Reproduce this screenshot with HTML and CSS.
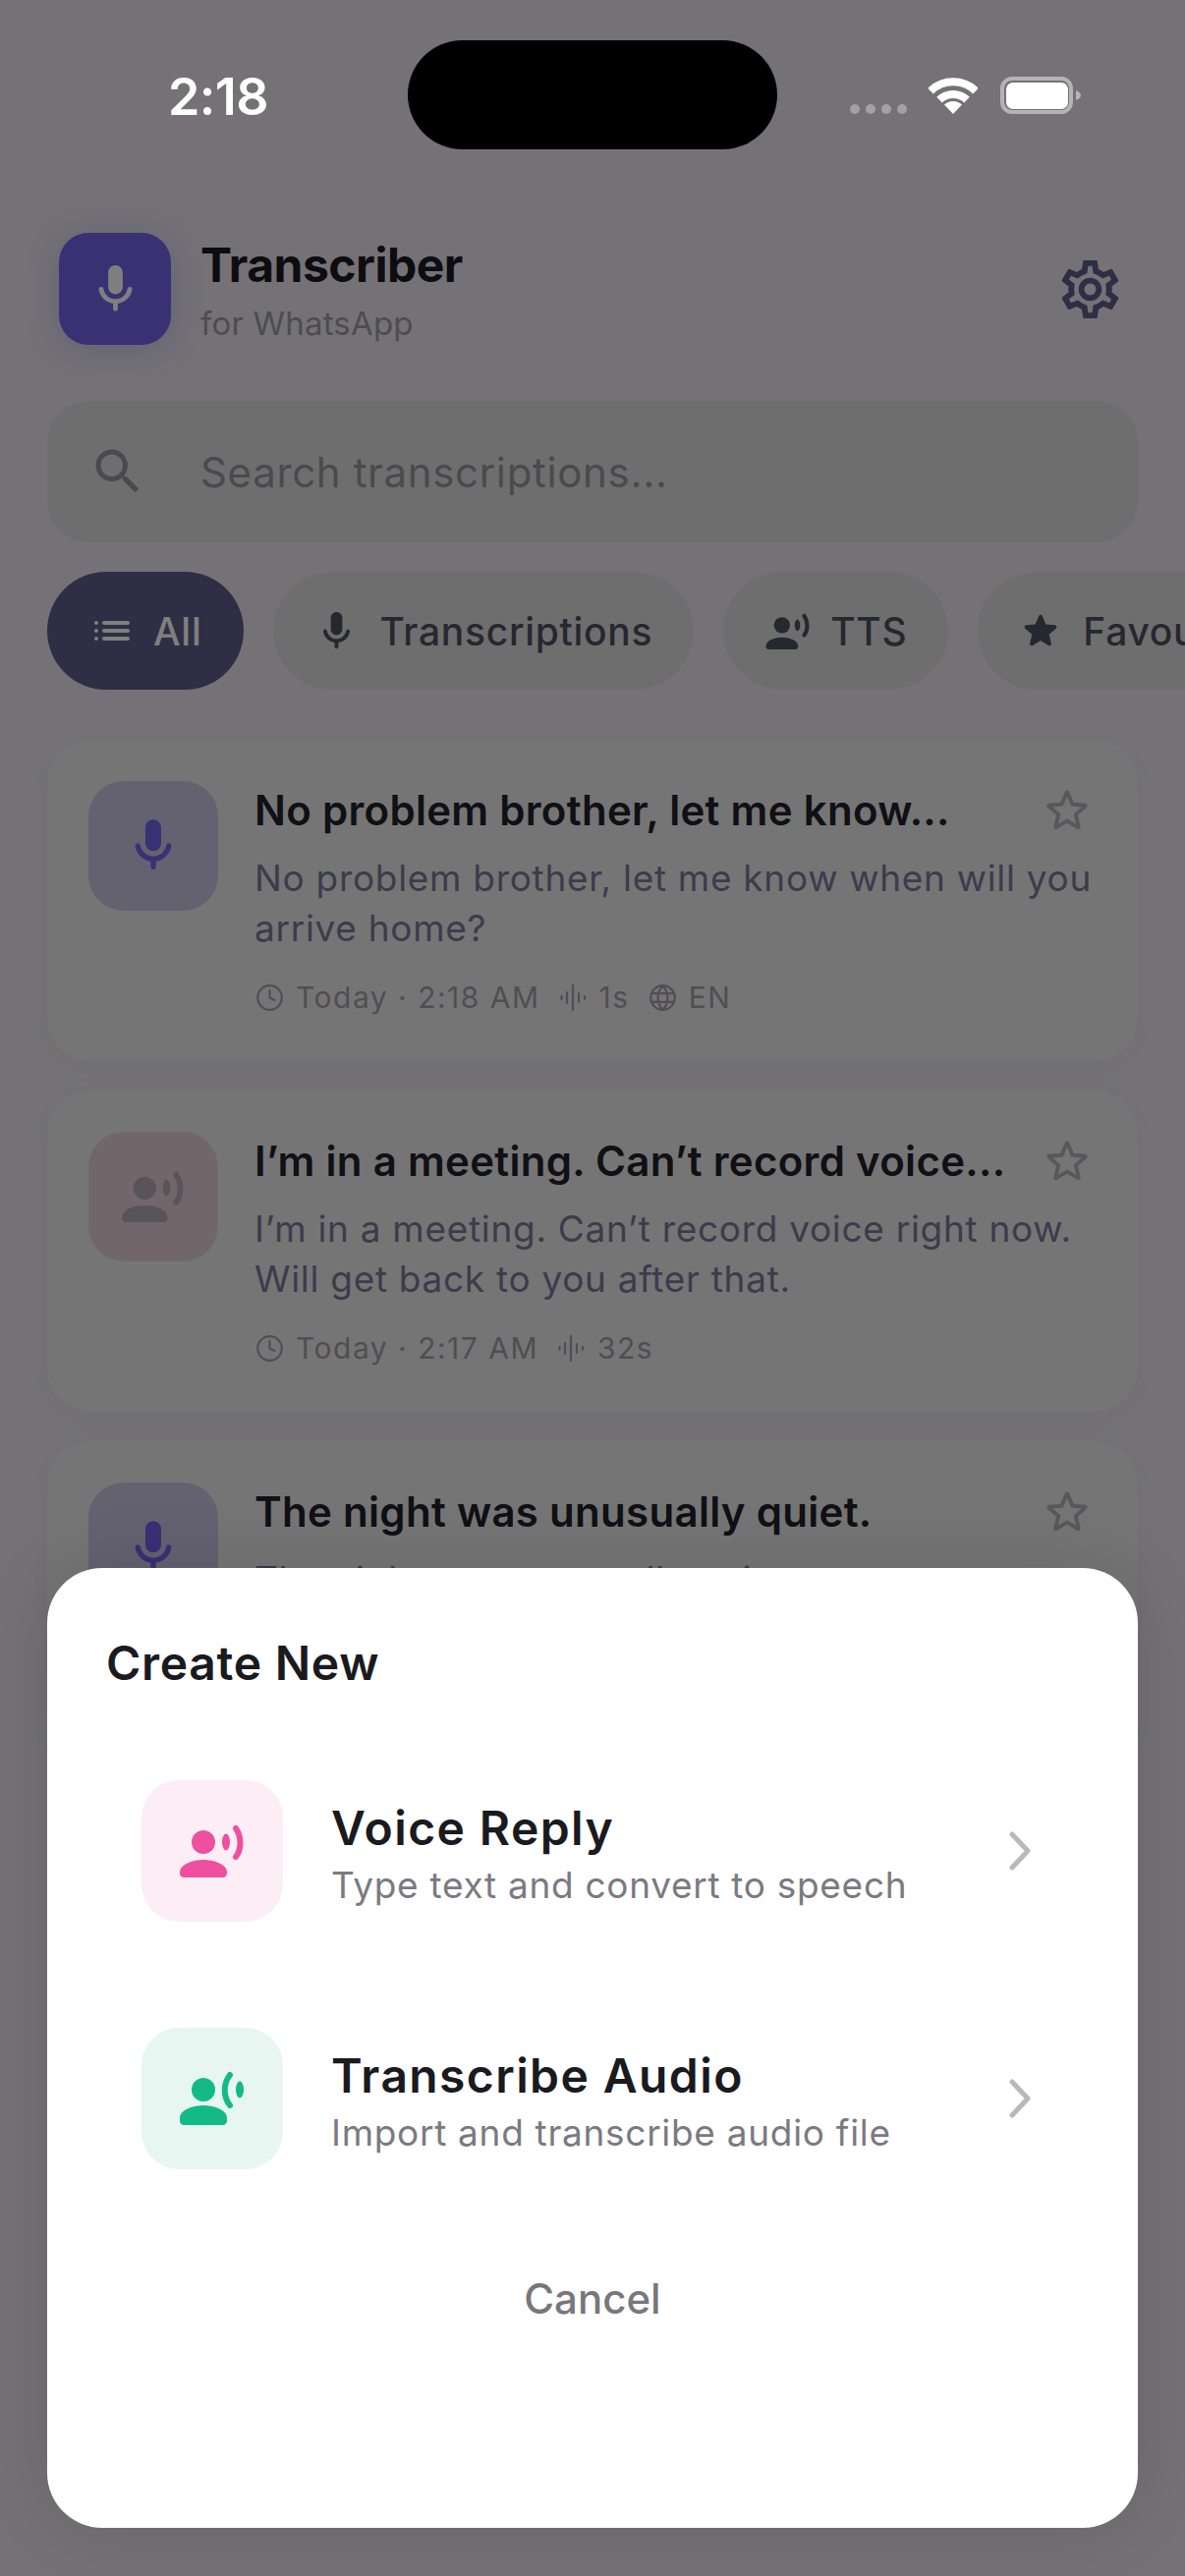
FILE: index.html
```html
<!DOCTYPE html>
<html lang="en">
	<head>
		<meta charset="UTF-8" />
		<title>Transcriber for WhatsApp</title>
		<link rel="stylesheet" href="styles.css">
	</head>
	<body>
		<svg class="sprites" xmlns="http://www.w3.org/2000/svg">
			<symbol id="i-mic" viewBox="0 0 24 24"><path d="M12 14c1.66 0 3-1.34 3-3V5c0-1.66-1.34-3-3-3S9 3.34 9 5v6c0 1.66 1.34 3 3 3zm5.91-3c-.49 0-.9.36-.98.85C16.52 14.2 14.47 16 12 16s-4.52-1.8-4.93-4.15c-.08-.49-.49-.85-.98-.85-.61 0-1.09.54-1 1.14.49 3 2.89 5.35 5.91 5.78V20c0 .55.45 1 1 1s1-.45 1-1v-2.08c3.02-.43 5.42-2.78 5.91-5.78.1-.6-.39-1.14-1-1.14z"/></symbol>
			<symbol id="i-voice" viewBox="36 42 72 60"><circle cx="63" cy="63" r="12"/><path d="M39 94c0-9 14-13 24-13s24 4 24 13v1c0 2-2 4-4 4H43c-2 0-4-2-4-4z"/><ellipse cx="86" cy="63" rx="4" ry="8.5"/><path d="M96 49c6 9 6 21 0 29" fill="none" stroke="currentColor" stroke-width="6" stroke-linecap="round"/></symbol>
			<symbol id="i-listen" viewBox="36 42 72 60"><circle cx="63" cy="63" r="12"/><path d="M39 92c0-9 14-13 24-13s24 4 24 13v3c0 2-2 4-4 4H43c-2 0-4-2-4-4z"/><ellipse cx="100" cy="63" rx="4" ry="8.5"/><path d="M90 48c-7 9-7 22 0 31" fill="none" stroke="currentColor" stroke-width="6" stroke-linecap="round"/></symbol>
			<symbol id="i-star" viewBox="0 0 24 24"><path d="M19.65 9.04l-4.84-.42-1.89-4.45c-.34-.81-1.5-.81-1.84 0L9.19 8.63l-4.84.41c-.88.07-1.24 1.17-.57 1.75l3.67 3.18-1.1 4.72c-.2.86.73 1.54 1.49 1.08l4.16-2.5 4.16 2.51c.76.46 1.69-.22 1.49-1.08l-1.1-4.73 3.67-3.18c.67-.58.32-1.68-.56-1.75zM12 15.4l-3.76 2.27 1-4.28-3.32-2.88 4.38-.38L12 6.1l1.71 4.04 4.38.38-3.32 2.88 1 4.28L12 15.4z"/></symbol>
			<symbol id="i-clock" viewBox="1 1 22 22"><g fill="none" stroke="currentColor" stroke-width="1.8" stroke-linecap="round" stroke-linejoin="round"><circle cx="12" cy="12" r="10"/><path d="M12 6v6l4 2"/></g></symbol>
			<symbol id="i-wave" viewBox="0 0 27 27"><g stroke="currentColor" stroke-width="2.2" stroke-linecap="round"><path d="M1.5 12v3M7 8v11M13 1v25M19 9v9M25 12v3"/></g></symbol>
			<symbol id="i-globe" viewBox="1 1 22 22"><g fill="none" stroke="currentColor" stroke-width="1.8"><circle cx="12" cy="12" r="10"/><path d="M12 2a14.500 14.500 0 0 0 0 20 14.500 14.500 0 0 0 0-20M2.600 8.500h18.800M2.600 15.500h18.800"/></g></symbol>
		</svg>

		<div class="screen">
			<div class="app">
				<div class="status-spacer"></div>

				<header class="top">
					<div class="logo">
						<svg class="logo-mic"><use href="#i-mic"/></svg>
					</div>
					<div class="brand">
						<div class="brand-name">Transcriber</div>
						<div class="brand-sub">for WhatsApp</div>
					</div>
					<svg class="gear" viewBox="0 0 24 24"><path d="M19.43 12.98c.04-.32.07-.64.07-.98 0-.34-.03-.66-.07-.98l2.11-1.65c.19-.15.24-.42.12-.64l-2-3.46c-.09-.16-.26-.25-.44-.25-.06 0-.12.01-.17.03l-2.49 1c-.52-.4-1.08-.73-1.69-.98l-.38-2.65C14.46 2.18 14.25 2 14 2h-4c-.25 0-.46.18-.49.42l-.38 2.65c-.61.25-1.17.59-1.69.98l-2.49-1c-.06-.02-.12-.03-.18-.03-.17 0-.34.09-.43.25l-2 3.46c-.13.22-.07.49.12.64l2.11 1.65c-.04.32-.07.65-.07.98 0 .33.03.66.07.98l-2.11 1.65c-.19.15-.24.42-.12.64l2 3.46c.09.16.26.25.44.25.06 0 .12-.01.17-.03l2.49-1c.52.4 1.08.73 1.69.98l.38 2.65c.03.24.24.42.49.42h4c.25 0 .46-.18.49-.42l.38-2.65c.61-.25 1.17-.59 1.69-.98l2.49 1c.06.02.12.03.18.03.17 0 .34-.09.43-.25l2-3.46c.12-.22.07-.49-.12-.64l-2.11-1.65zm-1.98-1.71c.04.31.05.52.05.73 0 .21-.02.43-.05.73l-.14 1.13.89.7 1.08.84-.7 1.21-1.27-.51-1.04-.42-.9.68c-.43.32-.84.56-1.25.73l-1.06.43-.16 1.13-.2 1.35h-1.4l-.19-1.35-.16-1.13-1.06-.43c-.43-.18-.83-.41-1.23-.71l-.91-.7-1.06.43-1.27.51-.7-1.21 1.08-.84.89-.7-.14-1.13c-.03-.31-.05-.54-.05-.74s.02-.43.05-.73l.14-1.13-.89-.7-1.08-.84.7-1.21 1.27.51 1.04.42.9-.68c.43-.32.84-.56 1.25-.73l1.06-.43.16-1.13.2-1.35h1.39l.19 1.35.16 1.13 1.06.43c.43.18.83.41 1.23.71l.91.7 1.06-.43 1.27-.51.7 1.21-1.07.85-.89.7.14 1.13zM12 8c-2.21 0-4 1.79-4 4s1.79 4 4 4 4-1.79 4-4-1.79-4-4-4zm0 6c-1.1 0-2-.9-2-2s.9-2 2-2 2 .9 2 2-.9 2-2 2z"/></svg>
				</header>

				<div class="search">
					<svg class="search-icon" viewBox="0 0 24 24"><path d="M15.5 14h-.79l-.28-.27C15.41 12.59 16 11.11 16 9.5 16 5.91 13.09 3 9.5 3S3 5.91 3 9.5 5.91 16 9.5 16c1.61 0 3.09-.59 4.23-1.57l.27.28v.79l5 4.99L20.49 19l-4.99-5zm-6 0C7.01 14 5 11.99 5 9.5S7.01 5 9.5 5 14 7.01 14 9.5 11.99 14 9.5 14z"/></svg>
					<span class="search-text">Search transcriptions...</span>
				</div>

				<div class="chips">
					<div class="chip chip-active">
						<svg class="chip-list" viewBox="0 0 24 24"><path d="M4 13c.55 0 1-.45 1-1s-.45-1-1-1-1 .45-1 1 .45 1 1 1zm0 4c.55 0 1-.45 1-1s-.45-1-1-1-1 .45-1 1 .45 1 1 1zm0-8c.55 0 1-.45 1-1s-.45-1-1-1-1 .45-1 1 .45 1 1 1zm4 4h12c.55 0 1-.45 1-1s-.45-1-1-1H8c-.55 0-1 .45-1 1s.45 1 1 1zm0 4h12c.55 0 1-.45 1-1s-.45-1-1-1H8c-.55 0-1 .45-1 1s.45 1 1 1zM7 8c0 .55.45 1 1 1h12c.55 0 1-.45 1-1s-.45-1-1-1H8c-.55 0-1 .45-1 1z"/></svg>
						All
					</div>
					<div class="chip">
						<svg class="chip-mic"><use href="#i-mic"/></svg>
						Transcriptions
					</div>
					<div class="chip">
						<svg class="chip-voice"><use href="#i-voice"/></svg>
						TTS
					</div>
					<div class="chip">
						<svg class="chip-star" viewBox="0 0 24 24"><path d="M12 17.27l4.15 2.51c.76.46 1.69-.22 1.49-1.08l-1.1-4.72 3.67-3.18c.67-.58.31-1.68-.57-1.75l-4.83-.41-1.89-4.46c-.34-.81-1.5-.81-1.84 0L9.19 8.63l-4.83.41c-.88.07-1.24 1.17-.57 1.75l3.67 3.18-1.1 4.72c-.2.86.73 1.54 1.49 1.08l4.15-2.5z"/></svg>
						Favourites
					</div>
				</div>

				<div class="list">
					<article class="card">
						<div class="tile tile-mic"><svg class="tile-mic-svg"><use href="#i-mic"/></svg></div>
						<div class="card-main">
							<div class="card-head">
								<h2 class="card-title">No problem brother, let me know...</h2>
								<svg class="card-star"><use href="#i-star"/></svg>
							</div>
							<p class="card-body">No problem brother, let me know when will you arrive home?</p>
							<div class="meta">
								<span class="meta-item"><svg class="meta-icon"><use href="#i-clock"/></svg>Today · 2:18 AM</span>
								<span class="meta-item"><svg class="meta-icon"><use href="#i-wave"/></svg>1s</span>
								<span class="meta-item"><svg class="meta-icon"><use href="#i-globe"/></svg>EN</span>
							</div>
						</div>
					</article>

					<article class="card">
						<div class="tile tile-voice"><svg class="tile-voice-svg"><use href="#i-voice"/></svg></div>
						<div class="card-main">
							<div class="card-head">
								<h2 class="card-title">I’m in a meeting. Can’t record voice...</h2>
								<svg class="card-star"><use href="#i-star"/></svg>
							</div>
							<p class="card-body">I’m in a meeting. Can’t record voice right now. Will get back to you after that.</p>
							<div class="meta">
								<span class="meta-item"><svg class="meta-icon"><use href="#i-clock"/></svg>Today · 2:17 AM</span>
								<span class="meta-item"><svg class="meta-icon"><use href="#i-wave"/></svg>32s</span>
							</div>
						</div>
					</article>

					<article class="card">
						<div class="tile tile-mic"><svg class="tile-mic-svg"><use href="#i-mic"/></svg></div>
						<div class="card-main">
							<div class="card-head">
								<h2 class="card-title">The night was unusually quiet.</h2>
								<svg class="card-star"><use href="#i-star"/></svg>
							</div>
							<p class="card-body">The night was unusually quiet.</p>
						</div>
					</article>
				</div>
			</div>

			<div class="overlay"></div>

			<div class="status">
				<div class="time">2:18</div>
				<div class="island"></div>
				<div class="status-icons">
					<div class="signal"><i></i><i></i><i></i><i></i></div>
					<svg class="wifi" viewBox="0 0 50 37"><g fill="none" stroke="#fff" stroke-width="8"><path d="M2 13.700a33 33 0 0 1 46 0"/><path d="M11 22.700a20 20 0 0 1 28 0"/></g><path d="M25 37l-9-9.500a13 13 0 0 1 18 0z" fill="#fff"/></svg>
					<svg class="battery" viewBox="0 0 82 38"><rect x="2" y="2" width="70" height="34" rx="10" fill="none" stroke="#b4b4b6" stroke-width="4"/><rect x="6" y="6" width="63" height="27" rx="7" fill="#fff"/><path d="M77 14c3 1 5 3 5 5s-2 4-5 5z" fill="#b4b4b6"/></svg>
				</div>
			</div>

			<section class="sheet">
				<h2 class="sheet-title">Create New</h2>
				<div class="option">
					<div class="option-tile option-pink"><svg class="option-icon"><use href="#i-voice"/></svg></div>
					<div class="option-text">
						<div class="option-title">Voice Reply</div>
						<div class="option-sub">Type text and convert to speech</div>
					</div>
					<svg class="chevron" viewBox="0 0 24 40"><path d="M4 3l16 17L4 37"/></svg>
				</div>
				<div class="option">
					<div class="option-tile option-green"><svg class="option-icon"><use href="#i-listen"/></svg></div>
					<div class="option-text">
						<div class="option-title">Transcribe Audio</div>
						<div class="option-sub">Import and transcribe audio file</div>
					</div>
					<svg class="chevron" viewBox="0 0 24 40"><path d="M4 3l16 17L4 37"/></svg>
				</div>
				<div class="cancel">Cancel</div>
			</section>
		</div>
	</body>
</html>
```

FILE: styles.css
```css
* {
	box-sizing: border-box;
	margin: 0;
	padding: 0;
}

body {
	font-family: Inter, "Noto Sans", sans-serif;
	background-color: #747276;
}

.sprites {
	display: none;
}

svg {
	display: block;
	flex-shrink: 0;
	fill: currentColor;
}

.screen {
	position: relative;
	width: 1206px;
	height: 2622px;
	overflow: hidden;
}

.app {
	height: 100%;
	background-color: #e8e5ec;
	overflow: hidden;
}

.status-spacer {
	height: 152px;
}

.overlay {
	position: absolute;
	inset: 0;
	background: rgba(0, 0, 0, 0.5);
}

/* status bar sits above the dim layer */
.status {
	position: absolute;
	top: 41px;
	left: 0;
	width: 100%;
	height: 111px;
	display: flex;
	align-items: center;
	padding-left: 171px;
}

.time {
	width: 244px;
	padding-top: 3px;
	font-size: 52px;
	font-weight: 600;
	color: white;
	letter-spacing: -0.6px;
}

.island {
	width: 376px;
	height: 111px;
	border-radius: 56px;
	background: black;
}

.status-icons {
	display: flex;
	align-items: flex-end;
	margin-left: 74px;
	height: 38px;
}

.signal {
	display: flex;
	gap: 6px;
}

.signal i {
	width: 10px;
	height: 10px;
	border-radius: 50%;
	background: #a2a1a4;
}

.wifi {
	width: 50px;
	height: 37px;
	margin-left: 22px;
}

.battery {
	width: 82px;
	height: 38px;
	margin-left: 23px;
}

.top {
	display: flex;
	align-items: center;
	margin-top: 85px;
	padding: 0 61px 0 60px;
	height: 114px;
}

.logo {
	width: 114px;
	height: 114px;
	border-radius: 30px;
	background: #7560e8;
	color: white;
	display: flex;
	align-items: center;
	justify-content: center;
	box-shadow: 0 4px 36px rgba(117, 96, 232, 0.3);
}

.logo-mic {
	width: 59px;
	height: 59px;
}

.brand {
	flex: 1;
	margin-left: 30px;
	padding-top: 3px;
}

.brand-name {
	font-size: 48px;
	font-weight: 700;
	line-height: 58px;
	color: #1a1a22;
	letter-spacing: -0.5px;
}

.brand-sub {
	font-size: 33px;
	line-height: 42px;
	margin-top: 9px;
	letter-spacing: 0.2px;
	color: #9c989f;
}

.gear {
	width: 71px;
	height: 71px;
	color: #5c5c88;
}

.search {
	display: flex;
	align-items: center;
	margin: 57px 48px 0;
	height: 144px;
	padding-left: 42px;
	border-radius: 42px;
	background: #dddddf;
	color: #94949a;
}

.search-icon {
	width: 60px;
	height: 60px;
}

.search-text {
	margin-left: 54px;
	font-size: 42px;
	letter-spacing: 0.65px;
}

.chips {
	display: flex;
	gap: 30px;
	margin-top: 30px;
	padding-left: 48px;
}

.chip {
	display: flex;
	align-items: center;
	flex-shrink: 0;
	height: 120px;
	padding: 0 42px 0 41px;
	border-radius: 60px;
	background: #dddddf;
	color: #4e4e60;
	font-size: 39px;
	font-weight: 500;
	letter-spacing: 0.7px;
	white-space: nowrap;
}

.chip-active {
	padding: 0 43px 0 42px;
	background: #5c5c88;
	color: white;
}

.chip-list {
	width: 48px;
	height: 48px;
	margin-right: 18px;
}

.chip-mic {
	width: 47px;
	height: 47px;
	margin-right: 20px;
}

.chip-voice {
	width: 50px;
	height: 41px;
	margin-right: 18px;
}

.chip-star {
	width: 46px;
	height: 46px;
	margin-right: 20px;
}

.list {
	display: flex;
	flex-direction: column;
	gap: 30px;
	margin: 51px 48px 0;
}

.card {
	display: flex;
	flex-shrink: 0;
	gap: 37px;
	height: 327px;
	padding: 42px 43px 0 42px;
	border-radius: 44px;
	background: #ebebeb;
	box-shadow: 0 4px 30px rgba(0, 0, 0, 0.04);
}

.tile {
	display: flex;
	align-items: center;
	justify-content: center;
	width: 132px;
	height: 132px;
	border-radius: 36px;
}

.tile-mic {
	background: #c8c2e2;
	color: #7560e8;
}

.tile-voice {
	background: #e2ced6;
	color: #b0a8b0;
}

.tile-mic-svg {
	width: 64px;
	height: 64px;
}

.tile-voice-svg {
	width: 70px;
	height: 58px;
}

.card-main {
	flex: 1;
	min-width: 0;
}

.card-head {
	display: flex;
	justify-content: space-between;
	align-items: center;
	height: 60px;
}

.card-title {
	font-size: 42px;
	font-weight: 600;
	line-height: 60px;
	letter-spacing: 0.3px;
	color: #20202a;
	white-space: nowrap;
}

.card-star {
	width: 58px;
	height: 58px;
	color: #b0aeb4;
}

.card-body {
	margin-top: 13px;
	font-size: 37px;
	line-height: 51px;
	letter-spacing: 0.7px;
	color: #7a7698;
}

.meta {
	display: flex;
	gap: 20px;
	margin-top: 27px;
	padding-left: 2px;
	font-size: 30px;
	line-height: 36px;
	letter-spacing: 1.5px;
	color: #a09ca6;
}

.meta-item {
	display: flex;
	align-items: center;
	gap: 13px;
}

.meta-icon {
	width: 27px;
	height: 27px;
}

.sheet {
	position: absolute;
	top: 1596px;
	left: 48px;
	width: 1110px;
	height: 977px;
	padding: 67px 60px 0;
	border-radius: 56px;
	background: white;
	box-shadow: 0 0 70px rgba(0, 0, 0, 0.12);
}

.sheet-title {
	font-size: 48px;
	font-weight: 600;
	line-height: 60px;
	letter-spacing: 0.7px;
	color: #1a1a1f;
}

.option:first-of-type {
	margin-top: 35px;
}

.option {
	display: flex;
	align-items: center;
	height: 252px;
	padding: 0 48px 0 36px;
}

.option-tile {
	display: flex;
	align-items: center;
	justify-content: center;
	width: 144px;
	height: 144px;
	border-radius: 38px;
}

.option-pink {
	background: #fdeef5;
	color: #ee4f9f;
}

.option-green {
	background: #e7f6f1;
	color: #14ba83;
}

.option-icon {
	width: 72px;
	height: 60px;
}

.option-text {
	flex: 1;
	margin-left: 49px;
	padding-top: 6px;
}

.option-title {
	font-size: 48px;
	font-weight: 600;
	line-height: 56px;
	color: #1a1a1f;
	letter-spacing: 1.4px;
}

.option-sub {
	margin-top: 8px;
	font-size: 37px;
	line-height: 44px;
	letter-spacing: 0.7px;
	color: #7a7a80;
}

.chevron {
	width: 24px;
	height: 40px;
	fill: none;
	stroke: #b9b9b9;
	stroke-width: 5;
	stroke-linecap: round;
	stroke-linejoin: round;
}

.cancel {
	margin-top: 53px;
	text-align: center;
	font-size: 42px;
	font-weight: 500;
	line-height: 50px;
	color: #77777c;
}
```
